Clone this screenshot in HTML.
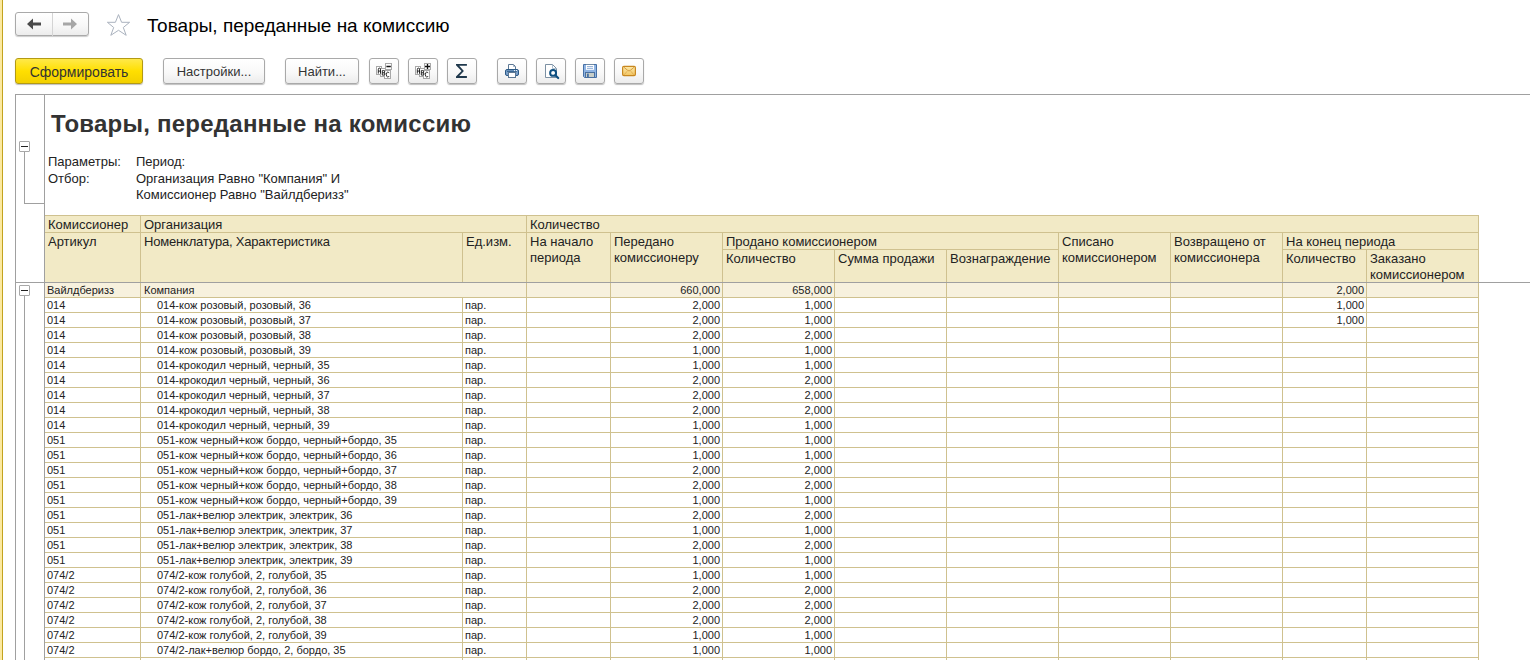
<!DOCTYPE html>
<html><head><meta charset="utf-8">
<style>
html,body{margin:0;padding:0;background:#fff;}
body{width:1530px;height:660px;overflow:hidden;position:relative;font-family:"Liberation Sans",sans-serif;}
div{position:absolute;box-sizing:border-box;}
.t{white-space:nowrap;color:#1e1e1e;}
.h{font-size:13px;line-height:16px;color:#222;}
.d{font-size:11px;line-height:14px;color:#222;}
.tb{width:11px;height:11px;border:1px solid #a8a8a8;background:#fff;border-radius:1px;}
.tm{left:1px;top:4px;width:7px;height:1px;background:#222;}
.btn{top:58px;height:26px;border:1px solid #a9a9a9;border-radius:3px;background:linear-gradient(#ffffff,#f9f9f9 55%,#ececec);box-shadow:0 1px 1px rgba(0,0,0,0.25);}
.btxt{font-size:13px;line-height:24px;color:#333;text-align:center;width:100%;left:0;top:1px;}
</style></head><body>
<!-- left yellow accent -->
<div style="left:0;top:0;width:2px;height:660px;background:#fce9a0"></div>
<div style="left:2px;top:0;width:1px;height:660px;background:#c2a31e"></div>

<!-- nav buttons -->
<div style="left:15px;top:12px;width:74px;height:24px;border:1px solid #a9a9a9;border-radius:3px;background:linear-gradient(#ffffff,#f7f7f7 60%,#ececec);box-shadow:0 1px 1px rgba(0,0,0,0.2);"></div>
<div style="left:52px;top:13px;width:1px;height:23px;background:#d4d4d4"></div>
<svg style="position:absolute;left:26px;top:18px" width="16" height="12" viewBox="0 0 16 12"><path d="M1 6 L7 0.6 L7 4.5 L15 4.5 L15 7.5 L7 7.5 L7 11.4 Z" fill="#4a4a4a"/></svg>
<svg style="position:absolute;left:62px;top:18px" width="16" height="12" viewBox="0 0 16 12"><path d="M15 6 L9 0.6 L9 4.5 L1 4.5 L1 7.5 L9 7.5 L9 11.4 Z" fill="#a6a6a6"/></svg>

<!-- star -->
<svg style="position:absolute;left:106px;top:13px" width="25" height="24" viewBox="0 0 25 24"><path d="M12.5 1.6 L15.6 9.3 L23.6 9.3 L17.3 14.5 L20.2 22.3 L12.5 17.3 L4.8 22.3 L7.7 14.5 L1.4 9.3 L9.4 9.3 Z" fill="none" stroke="#aab2be" stroke-width="1" stroke-linejoin="miter"/></svg>

<!-- window title -->
<div class="t" style="left:147px;top:13px;font-size:19px;line-height:25px;color:#000">Товары, переданные на комиссию</div>

<!-- toolbar -->
<div class="btn" style="left:15px;width:128px;border-color:#b39a14;background:linear-gradient(#ffe94a,#ffdf00 50%,#f2d000);"><div class="t btxt" style="font-size:14px;line-height:24px;color:#333">Сформировать</div></div>
<div class="btn" style="left:163px;width:102px"><div class="t btxt">Настройки...</div></div>
<div class="btn" style="left:285px;width:74px"><div class="t btxt">Найти...</div></div>
<div class="btn" style="left:369px;width:30px"></div>
<div class="btn" style="left:408px;width:30px"></div>
<div class="btn" style="left:447px;width:30px"></div>
<div class="btn" style="left:497px;width:30px"></div>
<div class="btn" style="left:536px;width:30px"></div>
<div class="btn" style="left:575px;width:30px"></div>
<div class="btn" style="left:614px;width:30px"></div>
<!-- icon: abc minus -->
<svg style="position:absolute;left:369px;top:58px" width="30" height="26" viewBox="0 0 30 26"><g stroke-width="1" fill="#fff" stroke="#a8a8a8">
<rect x="7.5" y="8.5" width="5" height="8"/>
<rect x="11.5" y="10.5" width="5" height="8"/>
<rect x="15.5" y="12.5" width="6" height="8"/>
<rect x="16.5" y="5.5" width="6" height="6"/>
</g><g fill="none" stroke="#151515" stroke-width="0.9">
<path d="M9.3 15.6 V11.6 Q9.3 10.1 10.4 10.1 Q11.5 10.1 11.5 11.6 V15.6 M9.3 13.1 H11.5"/>
<path d="M13.3 12.6 V17.1 H14.9 Q16 17.1 16 15.9 Q16 14.8 14.9 14.8 H13.3 M13.3 12.6 H14.7 Q15.7 12.6 15.7 13.7 Q15.7 14.75 14.7 14.75"/>
<path d="M20.1 15.1 Q19.8 14.1 18.7 14.1 Q17.4 14.1 17.4 16.55 Q17.4 19 18.7 19 Q19.8 19 20.1 18"/>
</g><path d="M17.4 8.5 H21.8" stroke="#111" stroke-width="1.5"/></svg>
<!-- icon: abc plus -->
<svg style="position:absolute;left:408px;top:58px" width="30" height="26" viewBox="0 0 30 26"><g stroke-width="1" fill="#fff" stroke="#a8a8a8">
<rect x="7.5" y="8.5" width="5" height="8"/>
<rect x="11.5" y="10.5" width="5" height="8"/>
<rect x="15.5" y="12.5" width="6" height="8"/>
<rect x="16.5" y="5.5" width="6" height="6"/>
</g><g fill="none" stroke="#151515" stroke-width="0.9">
<path d="M9.3 15.6 V11.6 Q9.3 10.1 10.4 10.1 Q11.5 10.1 11.5 11.6 V15.6 M9.3 13.1 H11.5"/>
<path d="M13.3 12.6 V17.1 H14.9 Q16 17.1 16 15.9 Q16 14.8 14.9 14.8 H13.3 M13.3 12.6 H14.7 Q15.7 12.6 15.7 13.7 Q15.7 14.75 14.7 14.75"/>
<path d="M20.1 15.1 Q19.8 14.1 18.7 14.1 Q17.4 14.1 17.4 16.55 Q17.4 19 18.7 19 Q19.8 19 20.1 18"/>
</g><path d="M17 8.5 H22 M19.5 6 V11" stroke="#111" stroke-width="1.3"/></svg>
<!-- icon: sigma -->
<svg style="position:absolute;left:447px;top:58px" width="30" height="26" viewBox="0 0 30 26">
<path d="M9 5.9 H19.9 V7.7 H12.2 L16.9 12.9 L12.2 18.1 H19.9 V19.9 H9 V18.6 L14.5 12.9 L9 7.2 Z" fill="#1f384c"/>
</svg>
<!-- icon: printer -->
<svg style="position:absolute;left:497px;top:58px" width="30" height="26" viewBox="0 0 30 26">
<path d="M11.5 11.5 V6.5 H16.5 L18.5 8.5 V11.5" fill="#fff" stroke="#5d7894" stroke-width="1"/>
<path d="M16.5 6.5 V8.5 H18.5" fill="none" stroke="#8aa0b8" stroke-width="0.8"/>
<rect x="8.5" y="11.5" width="13" height="6" rx="1.5" fill="#7a9fc9" stroke="#2c5a86" stroke-width="1"/>
<path d="M10 13.3 H20" stroke="#2c5a86" stroke-width="1"/>
<rect x="17" y="12.1" width="1" height="1" fill="#fff"/><rect x="19" y="12.1" width="1" height="1" fill="#fff"/>
<rect x="11.5" y="14.5" width="7" height="5" fill="#fff" stroke="#5d7894" stroke-width="1"/>
</svg>
<!-- icon: preview -->
<svg style="position:absolute;left:536px;top:58px" width="30" height="26" viewBox="0 0 30 26">
<path d="M9.5 19.5 V6.5 H16.5 L20.5 10.5 V19.5 Z" fill="#fff" stroke="#6d8399" stroke-width="0.9"/>
<path d="M16.5 6.5 V10.5 H20.5" fill="none" stroke="#9ab0c4" stroke-width="0.8"/>
<circle cx="17.1" cy="14.9" r="2.95" fill="#fff" stroke="#0e4f80" stroke-width="2"/>
<path d="M19.3 17.2 L22.2 20.1" stroke="#0e4f80" stroke-width="2.1" stroke-linecap="round"/>
</svg>
<!-- icon: save -->
<svg style="position:absolute;left:575px;top:58px" width="30" height="26" viewBox="0 0 30 26">
<path d="M8.5 6.5 H21.5 V19.5 H9.5 L8.5 18.5 Z" fill="#8fb4e3" stroke="#4670a6" stroke-width="1"/>
<rect x="11" y="6.6" width="8" height="5.2" fill="#fff"/>
<path d="M11 6.5 H19" stroke="#6f8aa6" stroke-width="1"/>
<path d="M12 8.6 H18 M12 10.4 H18" stroke="#84a6d2" stroke-width="0.9"/>
<rect x="10.5" y="14.5" width="9" height="5" fill="#c8cec8" stroke="#4a6f9e" stroke-width="1"/>
<rect x="12" y="15.6" width="1.8" height="3.4" fill="#4670a6"/>
</svg>
<!-- icon: mail -->
<svg style="position:absolute;left:614px;top:58px" width="30" height="26" viewBox="0 0 30 26">
<defs><linearGradient id="mg" x1="0" y1="0" x2="0" y2="1"><stop offset="0" stop-color="#fde9a8"/><stop offset="1" stop-color="#f2c460"/></linearGradient></defs>
<rect x="8.6" y="8.4" width="12.8" height="9.2" rx="1.3" fill="url(#mg)" stroke="#c8871f" stroke-width="1.2"/>
<path d="M10 9.3 L13.6 12.3 Q15 13.6 16.4 12.3 L20 9.3" fill="none" stroke="#cf953a" stroke-width="0.9"/>
<path d="M10.2 16.8 L13.2 13.2 M19.8 16.8 L16.8 13.2" fill="none" stroke="#dca850" stroke-width="0.8"/>
</svg>

<!-- report title -->
<div class="t" style="left:51px;top:110px;font-size:24px;line-height:28px;font-weight:bold;color:#333;letter-spacing:0.24px">Товары, переданные на комиссию</div>
<div class="t h" style="left:48px;top:154px;">Параметры:</div>
<div class="t h" style="left:136px;top:154px;">Период:</div>
<div class="t h" style="left:48px;top:171px;">Отбор:</div>
<div class="t h" style="left:136px;top:171px;">Организация Равно "Компания" И</div>
<div class="t h" style="left:136px;top:187px;">Комиссионер Равно "Вайлдберизз"</div>

<div style="left:45px;top:215px;width:1433px;height:67px;background:#f2eac6"></div>
<div style="left:45px;top:283px;width:1433px;height:14px;background:#f7f1de"></div>
<div style="left:45px;top:215px;width:1434px;height:1px;background:#cfc18f"></div>
<div style="left:45px;top:232px;width:1434px;height:1px;background:#cfc18f"></div>
<div style="left:722px;top:249px;width:336px;height:1px;background:#cfc18f"></div>
<div style="left:1282px;top:249px;width:196px;height:1px;background:#cfc18f"></div>
<div style="left:45px;top:297px;width:1434px;height:1px;background:#cfc18f"></div>
<div style="left:45px;top:312px;width:1434px;height:1px;background:#cfc18f"></div>
<div style="left:45px;top:327px;width:1434px;height:1px;background:#cfc18f"></div>
<div style="left:45px;top:342px;width:1434px;height:1px;background:#cfc18f"></div>
<div style="left:45px;top:357px;width:1434px;height:1px;background:#cfc18f"></div>
<div style="left:45px;top:372px;width:1434px;height:1px;background:#cfc18f"></div>
<div style="left:45px;top:387px;width:1434px;height:1px;background:#cfc18f"></div>
<div style="left:45px;top:402px;width:1434px;height:1px;background:#cfc18f"></div>
<div style="left:45px;top:417px;width:1434px;height:1px;background:#cfc18f"></div>
<div style="left:45px;top:432px;width:1434px;height:1px;background:#cfc18f"></div>
<div style="left:45px;top:447px;width:1434px;height:1px;background:#cfc18f"></div>
<div style="left:45px;top:462px;width:1434px;height:1px;background:#cfc18f"></div>
<div style="left:45px;top:477px;width:1434px;height:1px;background:#cfc18f"></div>
<div style="left:45px;top:492px;width:1434px;height:1px;background:#cfc18f"></div>
<div style="left:45px;top:507px;width:1434px;height:1px;background:#cfc18f"></div>
<div style="left:45px;top:522px;width:1434px;height:1px;background:#cfc18f"></div>
<div style="left:45px;top:537px;width:1434px;height:1px;background:#cfc18f"></div>
<div style="left:45px;top:552px;width:1434px;height:1px;background:#cfc18f"></div>
<div style="left:45px;top:567px;width:1434px;height:1px;background:#cfc18f"></div>
<div style="left:45px;top:582px;width:1434px;height:1px;background:#cfc18f"></div>
<div style="left:45px;top:597px;width:1434px;height:1px;background:#cfc18f"></div>
<div style="left:45px;top:612px;width:1434px;height:1px;background:#cfc18f"></div>
<div style="left:45px;top:627px;width:1434px;height:1px;background:#cfc18f"></div>
<div style="left:45px;top:642px;width:1434px;height:1px;background:#cfc18f"></div>
<div style="left:45px;top:657px;width:1434px;height:1px;background:#cfc18f"></div>
<div style="left:140px;top:215px;width:1px;height:485px;background:#cfc18f"></div>
<div style="left:526px;top:215px;width:1px;height:485px;background:#cfc18f"></div>
<div style="left:1478px;top:215px;width:1px;height:485px;background:#cfc18f"></div>
<div style="left:462px;top:232px;width:1px;height:50px;background:#cfc18f"></div>
<div style="left:462px;top:297px;width:1px;height:403px;background:#cfc18f"></div>
<div style="left:610px;top:232px;width:1px;height:468px;background:#cfc18f"></div>
<div style="left:722px;top:232px;width:1px;height:468px;background:#cfc18f"></div>
<div style="left:1058px;top:232px;width:1px;height:468px;background:#cfc18f"></div>
<div style="left:1170px;top:232px;width:1px;height:468px;background:#cfc18f"></div>
<div style="left:1282px;top:232px;width:1px;height:468px;background:#cfc18f"></div>
<div style="left:834px;top:249px;width:1px;height:451px;background:#cfc18f"></div>
<div style="left:946px;top:249px;width:1px;height:451px;background:#cfc18f"></div>
<div style="left:1366px;top:249px;width:1px;height:451px;background:#cfc18f"></div>
<div style="left:15px;top:94px;width:1515px;height:1px;background:#a0a0a0"></div>
<div style="left:15px;top:282px;width:1515px;height:1px;background:#a0a0a0"></div>
<div style="left:15px;top:94px;width:1px;height:566px;background:#a0a0a0"></div>
<div style="left:44px;top:94px;width:1px;height:566px;background:#a0a0a0"></div>
<div class="tb" style="left:19px;top:141px"><div class="tm"></div></div>
<div style="left:24px;top:152px;width:1px;height:51px;background:#a0a0a0"></div>
<div style="left:24px;top:203px;width:20px;height:1px;background:#a0a0a0"></div>
<div class="tb" style="left:19px;top:285px"><div class="tm"></div></div>
<div style="left:24px;top:296px;width:1px;height:364px;background:#a0a0a0"></div>
<div class="t h" style="left:48px;top:217px;">Комиссионер</div>
<div class="t h" style="left:144px;top:217px;">Организация</div>
<div class="t h" style="left:530px;top:217px;">Количество</div>
<div class="t h" style="left:48px;top:234px;">Артикул</div>
<div class="t h" style="left:144px;top:234px;letter-spacing:-0.19px">Номенклатура, Характеристика</div>
<div class="t h" style="left:466px;top:234px;">Ед.изм.</div>
<div class="t h" style="left:530px;top:234px;">На начало<br>периода</div>
<div class="t h" style="left:614px;top:234px;">Передано<br>комиссионеру</div>
<div class="t h" style="left:726px;top:234px;">Продано комиссионером</div>
<div class="t h" style="left:726px;top:251px;">Количество</div>
<div class="t h" style="left:838px;top:251px;">Сумма продажи</div>
<div class="t h" style="left:950px;top:251px;">Вознаграждение</div>
<div class="t h" style="left:1062px;top:234px;">Списано<br>комиссионером</div>
<div class="t h" style="left:1174px;top:234px;">Возвращено от<br>комиссионера</div>
<div class="t h" style="left:1286px;top:234px;">На конец периода</div>
<div class="t h" style="left:1286px;top:251px;">Количество</div>
<div class="t h" style="left:1370px;top:251px;">Заказано<br>комиссионером</div>
<div class="t d" style="left:47px;top:283px;">Вайлдберизз</div>
<div class="t d" style="left:144px;top:283px;">Компания</div>
<div class="t d r" style="right:810px;top:283px">660,000</div>
<div class="t d r" style="right:698px;top:283px">658,000</div>
<div class="t d r" style="right:166px;top:283px">2,000</div>
<div class="t d" style="left:47px;top:298px;">014</div>
<div class="t d" style="left:157px;top:298px;">014-кож розовый, розовый, 36</div>
<div class="t d" style="left:465px;top:298px;">пар.</div>
<div class="t d r" style="right:810px;top:298px">2,000</div>
<div class="t d r" style="right:698px;top:298px">1,000</div>
<div class="t d r" style="right:166px;top:298px">1,000</div>
<div class="t d" style="left:47px;top:313px;">014</div>
<div class="t d" style="left:157px;top:313px;">014-кож розовый, розовый, 37</div>
<div class="t d" style="left:465px;top:313px;">пар.</div>
<div class="t d r" style="right:810px;top:313px">2,000</div>
<div class="t d r" style="right:698px;top:313px">1,000</div>
<div class="t d r" style="right:166px;top:313px">1,000</div>
<div class="t d" style="left:47px;top:328px;">014</div>
<div class="t d" style="left:157px;top:328px;">014-кож розовый, розовый, 38</div>
<div class="t d" style="left:465px;top:328px;">пар.</div>
<div class="t d r" style="right:810px;top:328px">2,000</div>
<div class="t d r" style="right:698px;top:328px">2,000</div>
<div class="t d" style="left:47px;top:343px;">014</div>
<div class="t d" style="left:157px;top:343px;">014-кож розовый, розовый, 39</div>
<div class="t d" style="left:465px;top:343px;">пар.</div>
<div class="t d r" style="right:810px;top:343px">1,000</div>
<div class="t d r" style="right:698px;top:343px">1,000</div>
<div class="t d" style="left:47px;top:358px;">014</div>
<div class="t d" style="left:157px;top:358px;">014-крокодил черный, черный, 35</div>
<div class="t d" style="left:465px;top:358px;">пар.</div>
<div class="t d r" style="right:810px;top:358px">1,000</div>
<div class="t d r" style="right:698px;top:358px">1,000</div>
<div class="t d" style="left:47px;top:373px;">014</div>
<div class="t d" style="left:157px;top:373px;">014-крокодил черный, черный, 36</div>
<div class="t d" style="left:465px;top:373px;">пар.</div>
<div class="t d r" style="right:810px;top:373px">2,000</div>
<div class="t d r" style="right:698px;top:373px">2,000</div>
<div class="t d" style="left:47px;top:388px;">014</div>
<div class="t d" style="left:157px;top:388px;">014-крокодил черный, черный, 37</div>
<div class="t d" style="left:465px;top:388px;">пар.</div>
<div class="t d r" style="right:810px;top:388px">2,000</div>
<div class="t d r" style="right:698px;top:388px">2,000</div>
<div class="t d" style="left:47px;top:403px;">014</div>
<div class="t d" style="left:157px;top:403px;">014-крокодил черный, черный, 38</div>
<div class="t d" style="left:465px;top:403px;">пар.</div>
<div class="t d r" style="right:810px;top:403px">2,000</div>
<div class="t d r" style="right:698px;top:403px">2,000</div>
<div class="t d" style="left:47px;top:418px;">014</div>
<div class="t d" style="left:157px;top:418px;">014-крокодил черный, черный, 39</div>
<div class="t d" style="left:465px;top:418px;">пар.</div>
<div class="t d r" style="right:810px;top:418px">1,000</div>
<div class="t d r" style="right:698px;top:418px">1,000</div>
<div class="t d" style="left:47px;top:433px;">051</div>
<div class="t d" style="left:157px;top:433px;">051-кож черный+кож бордо, черный+бордо, 35</div>
<div class="t d" style="left:465px;top:433px;">пар.</div>
<div class="t d r" style="right:810px;top:433px">1,000</div>
<div class="t d r" style="right:698px;top:433px">1,000</div>
<div class="t d" style="left:47px;top:448px;">051</div>
<div class="t d" style="left:157px;top:448px;">051-кож черный+кож бордо, черный+бордо, 36</div>
<div class="t d" style="left:465px;top:448px;">пар.</div>
<div class="t d r" style="right:810px;top:448px">1,000</div>
<div class="t d r" style="right:698px;top:448px">1,000</div>
<div class="t d" style="left:47px;top:463px;">051</div>
<div class="t d" style="left:157px;top:463px;">051-кож черный+кож бордо, черный+бордо, 37</div>
<div class="t d" style="left:465px;top:463px;">пар.</div>
<div class="t d r" style="right:810px;top:463px">2,000</div>
<div class="t d r" style="right:698px;top:463px">2,000</div>
<div class="t d" style="left:47px;top:478px;">051</div>
<div class="t d" style="left:157px;top:478px;">051-кож черный+кож бордо, черный+бордо, 38</div>
<div class="t d" style="left:465px;top:478px;">пар.</div>
<div class="t d r" style="right:810px;top:478px">2,000</div>
<div class="t d r" style="right:698px;top:478px">2,000</div>
<div class="t d" style="left:47px;top:493px;">051</div>
<div class="t d" style="left:157px;top:493px;">051-кож черный+кож бордо, черный+бордо, 39</div>
<div class="t d" style="left:465px;top:493px;">пар.</div>
<div class="t d r" style="right:810px;top:493px">1,000</div>
<div class="t d r" style="right:698px;top:493px">1,000</div>
<div class="t d" style="left:47px;top:508px;">051</div>
<div class="t d" style="left:157px;top:508px;">051-лак+велюр электрик, электрик, 36</div>
<div class="t d" style="left:465px;top:508px;">пар.</div>
<div class="t d r" style="right:810px;top:508px">2,000</div>
<div class="t d r" style="right:698px;top:508px">2,000</div>
<div class="t d" style="left:47px;top:523px;">051</div>
<div class="t d" style="left:157px;top:523px;">051-лак+велюр электрик, электрик, 37</div>
<div class="t d" style="left:465px;top:523px;">пар.</div>
<div class="t d r" style="right:810px;top:523px">1,000</div>
<div class="t d r" style="right:698px;top:523px">1,000</div>
<div class="t d" style="left:47px;top:538px;">051</div>
<div class="t d" style="left:157px;top:538px;">051-лак+велюр электрик, электрик, 38</div>
<div class="t d" style="left:465px;top:538px;">пар.</div>
<div class="t d r" style="right:810px;top:538px">2,000</div>
<div class="t d r" style="right:698px;top:538px">2,000</div>
<div class="t d" style="left:47px;top:553px;">051</div>
<div class="t d" style="left:157px;top:553px;">051-лак+велюр электрик, электрик, 39</div>
<div class="t d" style="left:465px;top:553px;">пар.</div>
<div class="t d r" style="right:810px;top:553px">1,000</div>
<div class="t d r" style="right:698px;top:553px">1,000</div>
<div class="t d" style="left:47px;top:568px;">074/2</div>
<div class="t d" style="left:157px;top:568px;">074/2-кож голубой, 2, голубой, 35</div>
<div class="t d" style="left:465px;top:568px;">пар.</div>
<div class="t d r" style="right:810px;top:568px">1,000</div>
<div class="t d r" style="right:698px;top:568px">1,000</div>
<div class="t d" style="left:47px;top:583px;">074/2</div>
<div class="t d" style="left:157px;top:583px;">074/2-кож голубой, 2, голубой, 36</div>
<div class="t d" style="left:465px;top:583px;">пар.</div>
<div class="t d r" style="right:810px;top:583px">2,000</div>
<div class="t d r" style="right:698px;top:583px">2,000</div>
<div class="t d" style="left:47px;top:598px;">074/2</div>
<div class="t d" style="left:157px;top:598px;">074/2-кож голубой, 2, голубой, 37</div>
<div class="t d" style="left:465px;top:598px;">пар.</div>
<div class="t d r" style="right:810px;top:598px">2,000</div>
<div class="t d r" style="right:698px;top:598px">2,000</div>
<div class="t d" style="left:47px;top:613px;">074/2</div>
<div class="t d" style="left:157px;top:613px;">074/2-кож голубой, 2, голубой, 38</div>
<div class="t d" style="left:465px;top:613px;">пар.</div>
<div class="t d r" style="right:810px;top:613px">2,000</div>
<div class="t d r" style="right:698px;top:613px">2,000</div>
<div class="t d" style="left:47px;top:628px;">074/2</div>
<div class="t d" style="left:157px;top:628px;">074/2-кож голубой, 2, голубой, 39</div>
<div class="t d" style="left:465px;top:628px;">пар.</div>
<div class="t d r" style="right:810px;top:628px">1,000</div>
<div class="t d r" style="right:698px;top:628px">1,000</div>
<div class="t d" style="left:47px;top:643px;">074/2</div>
<div class="t d" style="left:157px;top:643px;">074/2-лак+велюр бордо, 2, бордо, 35</div>
<div class="t d" style="left:465px;top:643px;">пар.</div>
<div class="t d r" style="right:810px;top:643px">1,000</div>
<div class="t d r" style="right:698px;top:643px">1,000</div>
</body></html>
